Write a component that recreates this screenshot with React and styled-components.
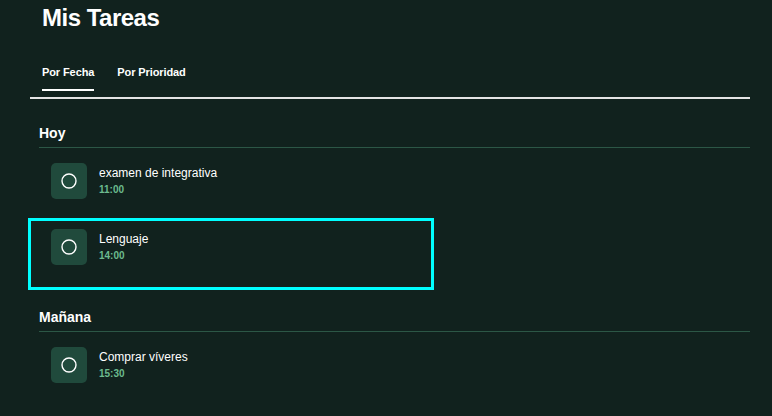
import React from "react";
import styled, { createGlobalStyle } from "styled-components";

const GlobalStyle = createGlobalStyle`
  html, body {
    margin: 0;
    padding: 0;
    background: #11221e;
  }
  body {
    font-family: "Liberation Sans", Arial, sans-serif;
    color: #ffffff;
  }
`;

const Page = styled.div`
  width: 720px;
  padding: 4px 0 0 30px;
  box-sizing: content-box;
`;

const Title = styled.h1`
  margin: 0;
  padding-left: 12px;
  font-size: 24px;
  line-height: 28px;
  font-weight: 700;
  letter-spacing: -0.5px;
  color: #ffffff;
`;

const TabBar = styled.div`
  display: flex;
  gap: 23px;
  margin-top: 34px;
  padding: 0 0 6px 12px;
  border-bottom: 2px solid #e4e4e4;
`;

const Tab = styled.button`
  appearance: none;
  background: none;
  border: none;
  margin: 0;
  padding: 0 0 10px 0;
  font-family: inherit;
  font-size: 11px;
  line-height: 13px;
  font-weight: 700;
  letter-spacing: -0.1px;
  color: #ffffff;
  border-bottom: 2px solid ${(p) => (p.$active ? "#ffffff" : "transparent")};
  cursor: pointer;
`;

const Sections = styled.div`
  display: flex;
  flex-direction: column;
  gap: 30px;
  padding: 26px 0 0 9px;
`;

const Section = styled.section`
  display: flex;
  flex-direction: column;
`;

const SectionHeading = styled.h2`
  margin: 0;
  padding-bottom: 5px;
  font-size: 14px;
  line-height: 17px;
  font-weight: 700;
  color: #ffffff;
  border-bottom: 1px solid #2c5746;
`;

const ItemList = styled.div`
  display: flex;
  flex-direction: column;
  gap: 16px;
  padding-top: 15px;
`;

const Item = styled.div`
  display: flex;
  align-items: flex-start;
  gap: 12px;
  width: 384px;
  min-height: 50px;
  padding: 0 12px;
  box-sizing: border-box;
  outline: ${(p) => (p.$focused ? "3px solid #00ffff" : "none")};
  outline-offset: 8px;
`;

const CheckBox = styled.div`
  flex: 0 0 auto;
  width: 36px;
  height: 36px;
  border-radius: 5px;
  background: #204a3c;
  display: flex;
  align-items: center;
  justify-content: center;
`;

const ItemText = styled.div`
  display: flex;
  flex-direction: column;
  gap: 2px;
  margin-top: 3px;
`;

const ItemTitle = styled.div`
  font-size: 12px;
  line-height: 15px;
  color: #ffffff;
`;

const ItemTime = styled.div`
  font-size: 10px;
  line-height: 13px;
  font-weight: 700;
  color: #6cbb8e;
`;

const CircleIcon = () => (
  <svg width="18" height="18" viewBox="0 0 18 18">
    <circle cx="9" cy="9" r="7" fill="none" stroke="#ffffff" strokeWidth="1.4" />
  </svg>
);

const data = [
  {
    day: "Hoy",
    tasks: [
      { title: "examen de integrativa", time: "11:00" },
      { title: "Lenguaje", time: "14:00", focused: true },
    ],
  },
  {
    day: "Mañana",
    tasks: [{ title: "Comprar víveres", time: "15:30" }],
  },
];

export default function App() {
  return (
    <>
      <GlobalStyle />
      <Page>
        <Title>Mis Tareas</Title>
        <TabBar>
          <Tab $active>Por Fecha</Tab>
          <Tab>Por Prioridad</Tab>
        </TabBar>
        <Sections>
          {data.map((s) => (
            <Section key={s.day}>
              <SectionHeading>{s.day}</SectionHeading>
              <ItemList>
                {s.tasks.map((t) => (
                  <Item key={t.title} $focused={t.focused}>
                    <CheckBox>
                      <CircleIcon />
                    </CheckBox>
                    <ItemText>
                      <ItemTitle>{t.title}</ItemTitle>
                      <ItemTime>{t.time}</ItemTime>
                    </ItemText>
                  </Item>
                ))}
              </ItemList>
            </Section>
          ))}
        </Sections>
      </Page>
    </>
  );
}
